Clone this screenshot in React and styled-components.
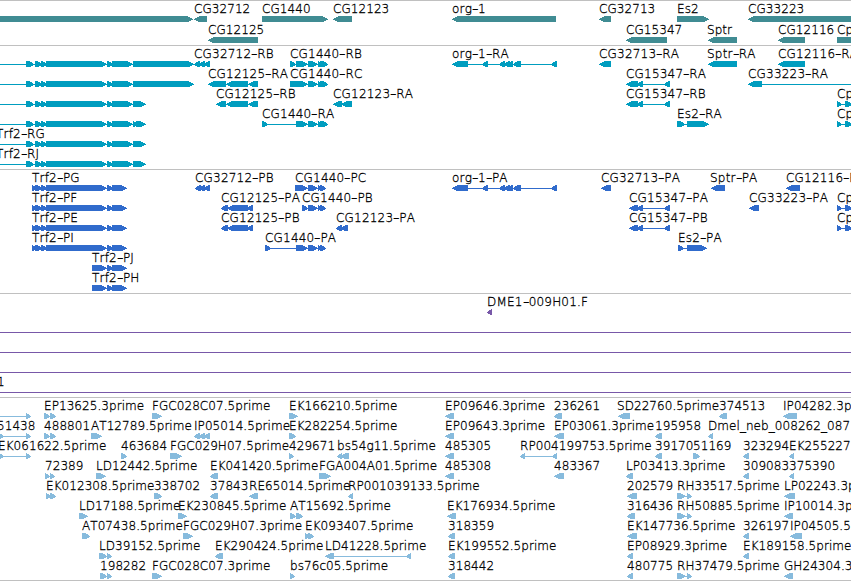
import React from "react";
import styled, { createGlobalStyle } from "styled-components";

const Global = createGlobalStyle`
  html, body { margin: 0; background: #fff; overflow: hidden; }
  * { box-sizing: border-box; }
`;

const Browser = styled.main`
  width: 851px;
  height: 581px;
  display: flex;
  flex-direction: column;
  overflow: hidden;
  font: 200 12px/14px "DejaVu Sans", sans-serif;
  font-kerning: none;
  color: #000;
  border-bottom: 1px solid #c0c0c0;
`;

const Track = styled.section`
  display: flex;
  flex-direction: column;
  padding: 1px 0 ${(p) => p.$pad}px;
  border-top: 1px solid #c0c0c0;
  color: ${(p) => p.$color};
`;

const Row = styled.div`
  position: relative;
  height: ${(p) => p.$height}px;
  flex: none;
`;

const Label = styled.span`
  position: absolute;
  top: 0;
  left: ${(p) => p.$x}px;
  color: #000;
  white-space: pre;
  letter-spacing: ${(p) => (p.$wide ? 0.2 : 0.06)}px;
  -webkit-text-stroke: 0.3px #000;
`;

const Hyphen = styled.span`
  display: inline-block;
  width: 6px;
  transform: scaleX(1.5);
  transform-origin: left;
`;

const Glyphs = styled.svg`
  position: absolute;
  top: 14px;
  left: 0;
  display: block;
  width: 851px;
  height: 6px;
  fill: currentColor;
`;

/* How far each of a head's six pixel rows stops short of its tip. */
const longHead = [5, 3, 1, 0, 2, 4];
const shortHead = [4, 2, 1, 0, 1, 3];

function block(a, b, dir) {
  return (b - a > 8 ? longHead : shortHead)
    .map((inset, y) => {
      const cut = Math.min(inset, b - a - 1);
      return dir > 0
        ? `M${a} ${y}H${b - cut}V${y + 1}H${a}Z`
        : `M${a + cut} ${y}H${b}V${y + 1}H${a + cut}Z`;
    })
    .join("");
}

/* "-" is an intron line; ">" and "<" are exons on the forward and reverse strand. */
function Shape({ spec }) {
  const [kind, a, b] = spec;
  if (kind === "-") return <path d={`M${a} 3H${b}V4H${a}Z`} />;
  return <path d={block(a, b, kind === ">" ? 1 : -1)} />;
}

const parse = (text) =>
  text.split(" ").filter(Boolean).map((t) => {
    const [a, b] = t.slice(1).split(",").map(Number);
    return [t[0], a, b];
  });

function Lane({ labels = [], glyphs = "", height = 20 }) {
  return (
    <Row $height={height}>
      {labels.map(([x, text]) => (
        <Label key={x} $x={x} $wide={text.includes("-")}>
          {text.split(/(-)/).map((part, i) => (part === "-" ? <Hyphen key={i}>-</Hyphen> : part))}
        </Label>
      ))}
      <Glyphs viewBox="0 0 851 6">
        {parse(glyphs).map((s, i) => <Shape key={i} spec={s} />)}
      </Glyphs>
    </Row>
  );
}

const trf = "-0,133 >26,34 >35,42 >41,47 >46,107 >107,113 >112,133 ";
const trfP = "-32,127 >32,37 >35,42 >41,47 >46,107 >107,113 >112,127 ";
const tail = ">308,318 >318,323 >320,328 ";
const tailP = ">308,318 >318,322 >320,326 ";
const org = "<452,468 -468,556 <482,488 <499,505 <504,510 <507,513 <513,521 <551,557 ";

const genes = [
  { labels: [[194, "CG32712"], [262, "CG1440"], [333, "CG12123"], [452, "org-1"], [599, "CG32713"], [677, "Es2"], [748, "CG33223"]],
    glyphs: ">-9,193 <194,207 >262,328 <333,352 <452,556 <599,611 >677,709 <748,860" },
  { labels: [[208, "CG12125"], [626, "CG15347"], [707, "Sptr"], [778, "CG12116"], [837, "Cp"]],
    glyphs: "<208,258 <626,667 <708,737 <778,805 >837,870" },
];

const transcripts = [
  { labels: [[194, "CG32712-RB"], [290, "CG1440-RB"], [452, "org-1-RA"], [599, "CG32713-RA"], [707, "Sptr-RA"], [778, "CG12116-RA"]],
    glyphs: trf + ">133,194 <194,200 <199,205 <204,210 >290,296 >296,308 " + tail + org + "<599,611 <708,737 <778,805" },
  { labels: [[208, "CG12125-RA"], [290, "CG1440-RC"], [626, "CG15347-RA"], [748, "CG33223-RA"]],
    glyphs: trf + ">133,194 <208,226 <226,248 <248,258 >290,308 " + tail + "<626,638 <637,643 -643,669 <664,670 <748,762 -762,851" },
  { labels: [[216, "CG12125-RB"], [333, "CG12123-RA"], [626, "CG15347-RB"], [837, "Cp"]],
    glyphs: trf + ">133,146 <216,226 <226,248 <248,258 <333,342 <341,352 <626,638 <637,643 -643,669 <664,670 >837,842 -842,846 >845,852" },
  { labels: [[262, "CG1440-RA"], [677, "Es2-RA"], [837, "Cp"]],
    glyphs: trf + ">133,138 >136,146 >262,268 -267,297 >296,308 " + tail + ">677,685 -685,687 >687,709 >837,842 -842,846 >845,852" },
  { labels: [[-4, "Trf2-RG"]], glyphs: trf + ">133,146" },
  { labels: [[-4, "Trf2-RJ"]], glyphs: trf + ">133,146" },
];

const proteins = [
  { labels: [[32, "Trf2-PG"], [195, "CG32712-PB"], [295, "CG1440-PC"], [452, "org-1-PA"], [601, "CG32713-PA"], [710, "Sptr-PA"], [786, "CG12116-PA"]],
    glyphs: trfP + "<195,201 <199,205 <204,210 >295,308 " + tailP + org + "<601,611 <711,725 <786,800" },
  { labels: [[32, "Trf2-PF"], [221, "CG12125-PA"], [302, "CG1440-PB"], [629, "CG15347-PA"], [749, "CG33223-PA"], [837, "Cp"]],
    glyphs: trfP + "<221,228 <227,248 <247,253 >302,308 " + tailP + "<629,638 <637,643 -643,669 <664,670 <749,759 >837,842 -842,846 >845,852" },
  { labels: [[32, "Trf2-PE"], [221, "CG12125-PB"], [336, "CG12123-PA"], [629, "CG15347-PB"], [837, "Cp"]],
    glyphs: trfP + "<221,228 <227,248 <247,253 <336,342 <341,348 <629,638 <637,643 -643,669 <664,670 >837,842 -842,846 >845,852" },
  { labels: [[32, "Trf2-PI"], [265, "CG1440-PA"], [678, "Es2-PA"]],
    glyphs: trfP + ">265,271 -270,297 >296,308 " + tailP + ">678,684 -684,687 >687,707" },
  { labels: [[92, "Trf2-PJ"]], glyphs: ">92,107 >107,113 >112,127" },
  { labels: [[92, "Trf2-PH"]], glyphs: ">92,107 >107,113 >112,127" },
];

const insertions = [
  { labels: [[487, "DME1-009H01.F"]], glyphs: "<487,492" },
  { glyphs: "-0,851" },
  { glyphs: "-0,851" },
  { glyphs: "-0,851" },
  { labels: [[-3, "1"]], glyphs: "-0,851" },
];

const ests = [
  { labels: [[44, "EP13625.3prime"], [152, "FGC028C07.5prime"], [289, "EK166210.5prime"], [445, "EP09646.3prime"], [554, "236261"], [617, "SD22760.5prime"], [719, "374513"], [783, "IP04282.3prime"]],
    glyphs: "-0,27 >26,31 >44,50 >50,56 >152,162 >289,298 <445,454 <554,562 <618,630 <719,727 <783,797" },
  { labels: [[-3, "51438"], [44, "488801"], [91, "AT12789.5prime"], [194, "IP05014.5prime"], [289, "EK282254.5prime"], [445, "EP09643.3prime"], [554, "EP03061.3prime"], [655, "195958"], [708, "Dmel_neb_008262_087"]],
    glyphs: ">-2,4 -0,27 >26,31 >44,50 >50,56 >91,102 <194,200 <199,205 <204,210 >289,296 <445,454 <554,564 <655,662 <708,713" },
  { labels: [[-2, "EK061622.5prime"], [121, "463684"], [170, "FGC029H07.5prime"], [289, "429671"], [337, "bs54g11.5prime"], [445, "485305"], [520, "RP004199753.5prime"], [655, "39170"], [693, "51169"], [743, "323294"], [789, "EK255227"]],
    glyphs: ">-2,4 -0,27 >26,31 >121,127 >170,182 >289,294 <337,342 <341,349 <445,454 <520,525 -525,553 <552,557 <655,662 >693,700 <743,749 <789,794" },
  { labels: [[45, "72389"], [96, "LD12442.5prime"], [210, "EK041420.5prime"], [319, "FGA004A01.5prime"], [445, "485308"], [554, "483367"], [626, "LP03413.3prime"], [743, "309083"], [789, "375390"]],
    glyphs: ">45,50 >50,55 >96,106 <210,218 >319,331 <445,454 <554,564 <626,633 <743,749 <789,794" },
  { labels: [[46, "EK012308.5prime"], [154, "338702"], [210, "37843"], [249, "RE65014.5prime"], [348, "RP001039133.5prime"], [627, "202579"], [677, "RH33517.5prime"], [784, "LP02243.3prime"]],
    glyphs: ">46,51 >50,56 >154,162 <210,218 <249,258 <348,353 <627,637 >677,686 -686,688 >687,692 <784,795" },
  { labels: [[79, "LD17188.5prime"], [178, "EK230845.5prime"], [290, "AT15692.5prime"], [447, "EK176934.5prime"], [627, "316436"], [677, "RH50885.5prime"], [784, "IP10014.3prime"]],
    glyphs: ">79,88 >178,187 >290,296 >296,303 <447,456 <627,635 >677,686 -686,688 >687,692 <784,793" },
  { labels: [[82, "AT07438.5prime"], [183, "FGC029H07.3prime"], [305, "EK093407.5prime"], [448, "318359"], [627, "EK147736.5prime"], [743, "326197"], [790, "IP04505.5prime"]],
    glyphs: ">82,90 >183,193 >305,310 >308,314 <448,455 <627,637 <743,749 <790,802" },
  { labels: [[99, "LD39152.5prime"], [215, "EK290424.5prime"], [325, "LD41228.5prime"], [448, "EK199552.5prime"], [627, "EP08929.3prime"], [743, "EK189158.5prime"]],
    glyphs: ">99,107 >107,112 <215,223 <325,334 -334,407 <406,411 <448,455 <627,633 <743,749" },
  { labels: [[100, "198282"], [152, "FGC028C07.3prime"], [290, "bs76c05.5prime"], [448, "318442"], [627, "480775"], [677, "RH37479.5prime"], [784, "GH24304.3prime"]],
    glyphs: ">100,107 >107,112 >152,162 >290,295 <448,455 <627,633 >677,686 -686,688 >687,692 <784,793" },
];

const tracks = [
  { id: "gene", color: "#408c93", pad: 1, height: 21, lanes: genes },
  { id: "transcript", color: "#009dbf", pad: 2, lanes: transcripts },
  { id: "protein", color: "#306bcc", pad: 2, lanes: proteins },
  { id: "insertion", color: "#7858a8", pad: 2, lanes: insertions },
  { id: "est", color: "#87bbdd", pad: 1, lanes: ests },
];

export default function App() {
  return (
    <>
      <Global />
      <Browser>
        {tracks.map((t) => (
          <Track key={t.id} $color={t.color} $pad={t.pad}>
            {t.lanes.map((lane, i) => <Lane key={i} height={t.height} {...lane} />)}
          </Track>
        ))}
      </Browser>
    </>
  );
}
